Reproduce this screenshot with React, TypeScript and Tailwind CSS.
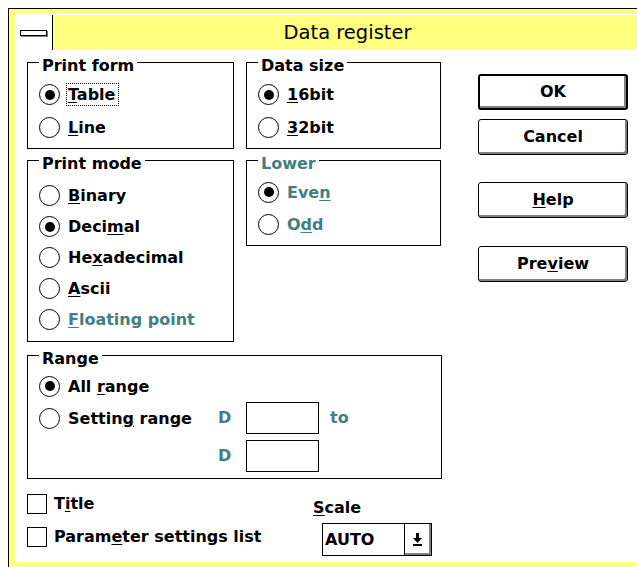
import React from 'react'

const teal = 'text-[#408080]'

function U({ children }: { children: React.ReactNode }) {
    return <span className="underline decoration-1 underline-offset-[2px]">{children}</span>
}

function Radio({ label, checked, focused, dim, h }: { label: React.ReactNode; checked?: boolean; focused?: boolean; dim?: boolean; h: string }) {
    return (
        <div className={`flex items-center gap-[6px] pl-[11px] ${h}`}>
            <div className="w-[21px] h-[21px] rounded-full border border-black bg-white flex items-center justify-center shrink-0">
                {checked && <div className="w-[10px] h-[10px] rounded-full bg-black" />}
            </div>
            <span className={`border pl-[1px] pr-[3px] leading-[21px] whitespace-nowrap ${focused ? 'border-dotted border-black' : 'border-transparent'} ${dim ? teal : ''}`}>
                {label}
            </span>
        </div>
    )
}

function GroupBox({ label, dim, className, children }: { label: string; dim?: boolean; className: string; children: React.ReactNode }) {
    return (
        <div className={`border border-black flex flex-col ${className}`}>
            <div className={`-mt-[5px] ml-[11px] self-start bg-white px-[3px] leading-[16px] ${dim ? teal : ''}`}>{label}</div>
            {children}
        </div>
    )
}

function Check({ label }: { label: React.ReactNode }) {
    return (
        <div className="flex items-center gap-[7px] h-[33px]">
            <div className="w-[20px] h-[20px] border border-black bg-white shrink-0" />
            <span className="leading-[21px] whitespace-nowrap">{label}</span>
        </div>
    )
}

function Button({ children, primary, className }: { children: React.ReactNode; primary?: boolean; className?: string }) {
    return (
        <div className={`flex items-center justify-center w-[150px] h-[36px] rounded-[3px] bg-white border-black shadow-[inset_-2px_-2px_0_#808080] ${primary ? 'border-2' : 'border'} ${className ?? ''}`}>
            {children}
        </div>
    )
}

export default function App() {
    return (
        <div className="w-[637px] h-[567px] overflow-hidden bg-white pl-[8px] pt-[8px] font-['DejaVu_Sans',sans-serif] font-bold text-[16px] text-black">
            <div className="w-[660px] border-l border-t border-black bg-[#ffff80] pl-[6px] pt-[5px] pb-[6px]">
                <div className="w-[627px]">
                    {/* title bar */}
                    <div className="flex h-[37px] border-t border-white border-b border-black">
                        <div className="w-[38px] bg-white border-r border-black flex items-center justify-center">
                            <div className="w-[27px] h-[6px] border border-black bg-white shadow-[1px_1px_0_#808080]" />
                        </div>
                        <div className="flex-1 flex items-center justify-center font-normal text-[19.5px]">Data register</div>
                    </div>

                    {/* client */}
                    <div className="h-[511px] bg-white flex">
                        <div className="pl-[12px] pt-[11px] w-[427px] flex flex-col">
                            <div className="grid grid-cols-[207px_195px] gap-x-[12px] gap-y-[11px] items-start">
                                <GroupBox label="Print form" className="h-[87px]">
                                    <div className="mt-[4px] flex flex-col">
                                        <Radio h="h-[33px]" checked focused label={<><U>T</U>able</>} />
                                        <Radio h="h-[33px]" label={<><U>L</U>ine</>} />
                                    </div>
                                </GroupBox>
                                <GroupBox label="Data size" className="h-[87px]">
                                    <div className="mt-[4px] flex flex-col">
                                        <Radio h="h-[33px]" checked label={<><U>1</U>6bit</>} />
                                        <Radio h="h-[33px]" label={<><U>3</U>2bit</>} />
                                    </div>
                                </GroupBox>
                                <GroupBox label="Print mode" className="h-[182px]">
                                    <div className="mt-[8px] flex flex-col">
                                        <Radio h="h-[31px]" label={<><U>B</U>inary</>} />
                                        <Radio h="h-[31px]" checked label={<>Deci<U>m</U>al</>} />
                                        <Radio h="h-[31px]" label={<>He<U>x</U>adecimal</>} />
                                        <Radio h="h-[31px]" label={<><U>A</U>scii</>} />
                                        <Radio h="h-[31px]" dim label={<><U>F</U>loating point</>} />
                                    </div>
                                </GroupBox>
                                <GroupBox label="Lower" dim className="h-[86px]">
                                    <div className="mt-[4px] flex flex-col">
                                        <Radio h="h-[32px]" checked dim label={<>Eve<U>n</U></>} />
                                        <Radio h="h-[32px]" dim label={<>O<U>d</U>d</>} />
                                    </div>
                                </GroupBox>
                            </div>

                            <GroupBox label="Range" className="mt-[13px] w-[415px] h-[124px]">
                                <div className="mt-[3px] flex flex-col">
                                    <Radio h="h-[32px]" checked label={<>All <U>r</U>ange</>} />
                                    <div className="flex items-center h-[32px]">
                                        <div className="w-[190px]">
                                            <Radio h="h-[32px]" label={<>Settin<U>g</U> range</>} />
                                        </div>
                                        <div className={`w-[28px] ${teal}`}>D</div>
                                        <div className="w-[73px] h-[32px] border border-black" />
                                        <div className={`ml-[11px] ${teal}`}>to</div>
                                    </div>
                                    <div className="flex items-center h-[32px] mt-[6px]">
                                        <div className="w-[190px]" />
                                        <div className={`w-[28px] ${teal}`}>D</div>
                                        <div className="w-[73px] h-[32px] border border-black" />
                                    </div>
                                </div>
                            </GroupBox>

                            <div className="flex items-start mt-[8px]">
                                <div className="w-[286px] flex flex-col">
                                    <Check label={<>T<U>i</U>tle</>} />
                                    <Check label={<>Param<U>e</U>ter settings list</>} />
                                </div>
                                <div className="mt-[13px] flex flex-col">
                                    <div className="leading-[16px]"><U>S</U>cale</div>
                                    <div className="ml-[9px] mt-[7px] flex w-[110px] h-[33px] border border-black">
                                        <div className="flex-1 flex items-center pl-[2px]">AUTO</div>
                                        <div className="w-[27px] border-l border-black bg-white shadow-[inset_-2px_-2px_0_#808080] flex items-center justify-center pr-[1px]">
                                            <svg width="11" height="15" viewBox="0 0 11 15">
                                                <rect x="4" y="1" width="3" height="6" fill="#000" />
                                                <polygon points="1,6 10,6 5.5,11" fill="#000" />
                                                <rect x="1" y="12" width="9" height="2" fill="#000" />
                                            </svg>
                                        </div>
                                    </div>
                                </div>
                            </div>
                        </div>

                        <div className="ml-[36px] pt-[23px] flex flex-col">
                            <Button primary>OK</Button>
                            <Button className="mt-[9px]">Cancel</Button>
                            <Button className="mt-[27px]"><span><U>H</U>elp</span></Button>
                            <Button className="mt-[28px]"><span>Pre<U>v</U>iew</span></Button>
                        </div>
                    </div>
                </div>
            </div>
        </div>
    )
}
